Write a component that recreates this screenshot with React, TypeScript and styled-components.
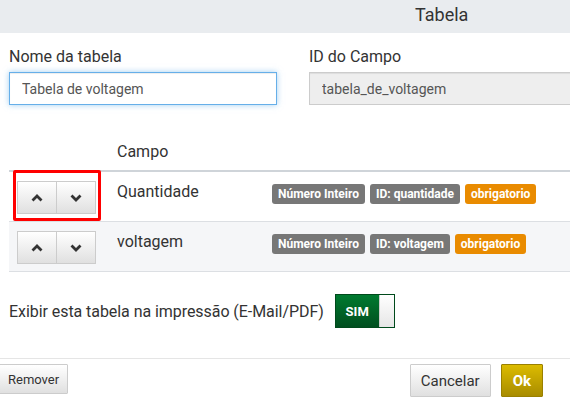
import React from "react";
import styled, { createGlobalStyle } from "styled-components";

const GlobalStyle = createGlobalStyle`
  html, body {
    margin: 0;
    padding: 0;
    background: #fff;
    overflow: hidden;
  }
  body {
    font-family: Roboto, "Liberation Sans", Arial, sans-serif;
    color: #333;
  }
`;

const campos = [
  { nome: "Quantidade", id: "quantidade", tipo: "Número Inteiro", obrigatorio: true, marcado: true },
  { nome: "voltagem", id: "voltagem", tipo: "Número Inteiro", obrigatorio: true, marcado: false },
];

const ChevronUp = () => (
  <svg width="12" height="8" viewBox="0 0 12 8">
    <polyline points="1.5,6.5 6,2 10.5,6.5" fill="none" stroke="#333" strokeWidth="2.8" />
  </svg>
);

const ChevronDown = () => (
  <svg width="12" height="8" viewBox="0 0 12 8">
    <polyline points="1.5,1.5 6,6 10.5,1.5" fill="none" stroke="#333" strokeWidth="2.8" />
  </svg>
);

const App = () => {
  return (
    <Modal>
      <GlobalStyle />
      <Header>
        <h4>Tabela</h4>
      </Header>

      <Body>
        <FieldsRow>
          <Field>
            <Label>Nome da tabela</Label>
            <Input $focused defaultValue="Tabela de voltagem" />
          </Field>
          <Field>
            <Label>ID do Campo</Label>
            <Input $disabled readOnly value="tabela_de_voltagem" />
          </Field>
        </FieldsRow>

        <Table>
          <HeadRow>
            <span />
            <span>Campo</span>
            <span />
          </HeadRow>
          {campos.map((c, i) => (
            <Row key={c.id} $striped={i % 2 === 1}>
              <OrderCell $highlight={c.marcado}>
                <BtnGroup>
                  <OrderBtn>
                    <ChevronUp />
                  </OrderBtn>
                  <OrderBtn>
                    <ChevronDown />
                  </OrderBtn>
                </BtnGroup>
              </OrderCell>
              <NameCell>{c.nome}</NameCell>
              <BadgeCell>
                <Badge>{c.tipo}</Badge>
                <Badge>ID: {c.id}</Badge>
                {c.obrigatorio && <Badge $warning>obrigatorio</Badge>}
              </BadgeCell>
            </Row>
          ))}
        </Table>

        <PrintRow>
          <span>Exibir esta tabela na impressão (E-Mail/PDF)</span>
          <Toggle>
            <ToggleOn>SIM</ToggleOn>
            <ToggleKnob />
          </Toggle>
        </PrintRow>
      </Body>

      <Footer>
        <Button $small>Remover</Button>
        <Actions>
          <Button>Cancelar</Button>
          <Button $primary>Ok</Button>
        </Actions>
      </Footer>
    </Modal>
  );
};

const Modal = styled.div`
  width: 570px;
  height: 401px;
  overflow: hidden;
  background: #fff;
`;

const Header = styled.div`
  height: 33px;
  box-sizing: border-box;
  background: #e9ecef;
  display: flex;
  align-items: center;
  padding: 0 0 4px 415px;

  h4 {
    margin: 0;
    font-size: 18px;
    font-weight: 400;
    color: #333;
  }
`;

const Body = styled.div`
  padding: 14px 0 0 9px;
`;

const FieldsRow = styled.div`
  display: grid;
  grid-template-columns: 268px 300px;
  column-gap: 32px;
`;

const Field = styled.div`
  display: flex;
  flex-direction: column;
`;

const Label = styled.label`
  font-size: 16px;
  line-height: 20px;
  color: #333;
  margin-bottom: 5px;
`;

const Input = styled.input<{ $focused?: boolean; $disabled?: boolean }>`
  box-sizing: border-box;
  height: 33px;
  width: 100%;
  padding: 0 12px;
  font-family: inherit;
  font-size: 14px;
  color: #555;
  outline: none;
  border: 1px solid ${(p) => (p.$focused ? "#66afe9" : "#ccc")};
  background: ${(p) => (p.$disabled ? "#eee" : "#fff")};
  box-shadow: ${(p) =>
    p.$focused
      ? "inset 0 1px 1px rgba(0,0,0,.075), 0 0 6px rgba(102,175,233,.6)"
      : "inset 0 1px 1px rgba(0,0,0,.075)"};
`;

const Table = styled.div`
  margin-top: 27px;
`;

const HeadRow = styled.div`
  display: grid;
  grid-template-columns: 108px 155px 1fr;
  height: 40px;
  align-items: end;
  padding-bottom: 9px;
  box-sizing: border-box;
  border-bottom: 2px solid #cfd4d9;
  font-size: 16px;
  color: #333;
`;

const Row = styled.div<{ $striped?: boolean }>`
  display: grid;
  grid-template-columns: 108px 155px 1fr;
  align-items: start;
  height: 50px;
  box-sizing: border-box;
  border-bottom: 1px solid #dcdfe3;
  background: ${(p) => (p.$striped ? "#f5f6f8" : "#fff")};
`;

const OrderCell = styled.div<{ $highlight?: boolean }>`
  position: relative;
  padding: 9px 0 0 8px;

  &::after {
    content: "";
    display: ${(p) => (p.$highlight ? "block" : "none")};
    position: absolute;
    left: 4px;
    top: -2px;
    width: 88px;
    height: 51px;
    box-sizing: border-box;
    border: 3px solid #f00;
    border-radius: 2px;
  }
`;

const BtnGroup = styled.div`
  display: inline-flex;
`;

const OrderBtn = styled.button`
  width: 40px;
  height: 33px;
  display: flex;
  align-items: center;
  justify-content: center;
  padding: 0;
  border: 1px solid #ccc;
  background: linear-gradient(to bottom, #fff 0%, #e0e0e0 100%);
  & + & {
    margin-left: -1px;
  }
`;

const NameCell = styled.div`
  padding-top: 10px;
  font-size: 16px;
  line-height: 20px;
  color: #333;
`;

const BadgeCell = styled.div`
  display: flex;
  gap: 5px;
  padding-top: 12px;
`;

const Badge = styled.span<{ $warning?: boolean }>`
  display: inline-flex;
  align-items: center;
  height: 20px;
  padding: 0 6px;
  border-radius: 3px;
  font-size: 12px;
  font-weight: 700;
  color: #fff;
  white-space: nowrap;
  background: ${(p) => (p.$warning ? "#e98b00" : "#777")};
`;

const PrintRow = styled.div`
  display: flex;
  align-items: center;
  gap: 11px;
  margin-top: 22px;
  font-size: 16px;
  letter-spacing: -0.06px;
  color: #333;
`;

const Toggle = styled.div`
  display: flex;
  height: 34px;
  width: 60px;
  box-sizing: border-box;
  border: 1px solid #004a1c;
  letter-spacing: 0;
`;

const ToggleOn = styled.div`
  flex: 1;
  display: flex;
  align-items: center;
  justify-content: center;
  font-size: 13px;
  font-weight: 700;
  color: #fff;
  background: linear-gradient(to bottom, #007a30 0%, #004f1f 100%);
`;

const ToggleKnob = styled.div`
  width: 14px;
  background: linear-gradient(to bottom, #fff 0%, #e6e6e6 100%);
  border-left: 1px solid #ccc;
`;

const Footer = styled.div`
  margin-top: 30px;
  border-top: 1px solid #e5e5e5;
  padding: 5px 27px 0 0;
  display: flex;
  justify-content: space-between;
  align-items: flex-start;
`;

const Actions = styled.div`
  display: flex;
  gap: 10px;
`;

const Button = styled.button<{ $primary?: boolean; $small?: boolean }>`
  box-sizing: border-box;
  height: ${(p) => (p.$small ? "30px" : "33px")};
  padding: ${(p) => (p.$small ? "0 8px" : p.$primary ? "0 11px" : "0 10px")};
  margin-left: ${(p) => (p.$small ? "-1px" : "0")};
  font-family: inherit;
  font-size: ${(p) => (p.$small ? "13px" : "15px")};
  font-weight: ${(p) => (p.$primary ? 700 : 400)};
  color: ${(p) => (p.$primary ? "#fff" : "#333")};
  border: 1px solid ${(p) => (p.$primary ? "#9a8000" : "#ccc")};
  border-radius: 1px;
  background: ${(p) =>
    p.$primary
      ? "linear-gradient(to bottom, #dcbb00 0%, #a88c00 100%)"
      : "linear-gradient(to bottom, #fff 0%, #e0e0e0 100%)"};
`;

export default App;
